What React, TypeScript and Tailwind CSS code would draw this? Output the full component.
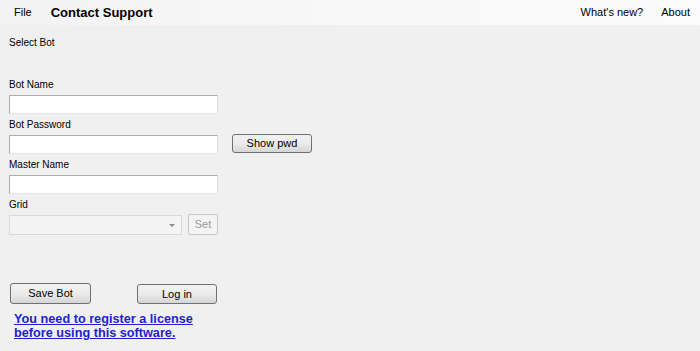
const font = "font-['Liberation_Sans',Arial,sans-serif]";

function Field({ label, mt }: { label: string; mt: string }) {
  return (
    <>
      <div className={`${mt} h-[12px] text-[10px] leading-[12px] text-black`}>{label}</div>
      <input
        type="text"
        className="mt-[4px] block h-[19px] w-[209px] border border-[#abadb3] border-b-[#e3e9ef] border-r-[#dbdfe6] bg-white outline-none"
      />
    </>
  );
}

function WinButton({ children, className = '' }: { children: React.ReactNode; className?: string }) {
  return (
    <button
      className={`flex items-center justify-center rounded-[3px] border border-[#707070] bg-gradient-to-b from-[#f2f2f2] via-[#ebebeb] to-[#d6d6d6] text-[11px] text-black ${className}`}
    >
      {children}
    </button>
  );
}

export default function App() {
  return (
    <div className={`h-[351px] w-[700px] overflow-hidden bg-[#f0f0f0] ${font}`}>
      <div className="flex h-[25px] items-center bg-gradient-to-r from-[#f3f3f3] via-[#f8f8f8] to-[#fbfbfb] text-[11px] text-black">
        <span className="ml-[14px]">File</span>
        <span className="ml-[19px] text-[13px] font-bold">Contact Support</span>
        <span className="ml-auto">What's new?</span>
        <span className="ml-[18px] mr-[10px]">About</span>
      </div>

      <div className="pl-[9px]">
        <div className="mt-[12px] h-[12px] text-[10px] leading-[12px]">Select Bot</div>

        <Field label="Bot Name" mt="mt-[30px]" />

        <div className="mt-[5px] h-[12px] text-[10px] leading-[12px]">Bot Password</div>
        <div className="mt-[4px] flex items-start gap-[14px]">
          <input
            type="password"
            className="block h-[19px] w-[209px] border border-[#abadb3] border-b-[#e3e9ef] border-r-[#dbdfe6] bg-white outline-none"
          />
          <WinButton className="-mt-px h-[19px] w-[80px]">Show pwd</WinButton>
        </div>

        <Field label="Master Name" mt="mt-[5px]" />

        <div className="mt-[5px] h-[12px] text-[10px] leading-[12px]">Grid</div>
        <div className="mt-[4px] flex items-start gap-[6px]">
          <div className="flex h-[20px] w-[173px] items-center justify-end border border-[#d9d9d9] bg-[#f4f4f4] pr-[6px]">
            <span className="h-0 w-0 border-x-[3px] border-t-[3px] border-x-transparent border-t-[#8a8a8a]" />
          </div>
          <button className="-mt-px flex h-[21px] w-[30px] items-center justify-center rounded-[2px] border border-[#c4c7c9] bg-[#f4f4f4] text-[11px] text-[#9a9a9a]">
            Set
          </button>
        </div>

        <div className="mt-[48px] flex items-start">
          <WinButton className="ml-px h-[21px] w-[81px]">Save Bot</WinButton>
          <WinButton className="ml-[46px] mt-px h-[20px] w-[80px]">Log in</WinButton>
        </div>

        <a
          href="#"
          className="ml-[5px] mt-[8px] block w-[200px] text-[12.7px] font-bold leading-[14px] text-[#1f1fcf] underline"
        >
          You need to register a license before using this software.
        </a>
      </div>
    </div>
  );
}
